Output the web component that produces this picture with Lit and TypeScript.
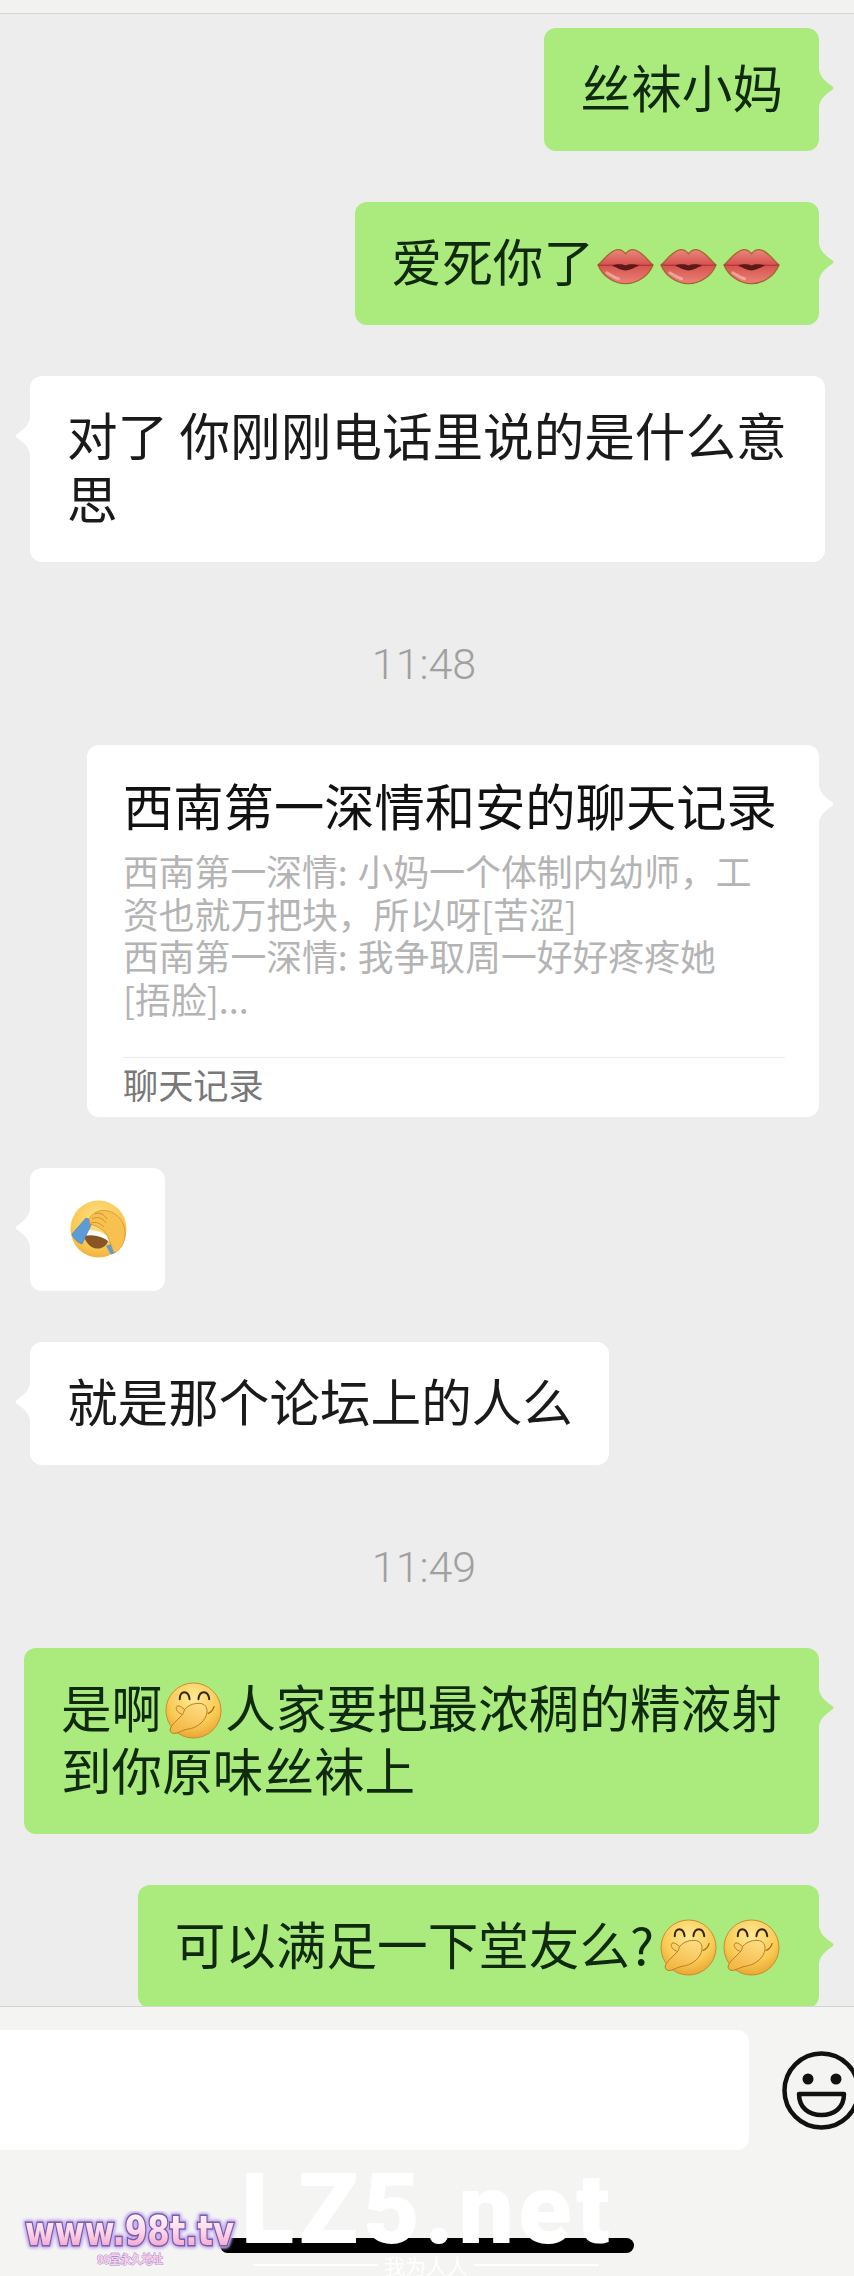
import { LitElement, html, css } from "lit";
import { customElement } from "lit/decorators.js";

const lips = () => html`<svg class="emoji lips" viewBox="0 0 58 38" aria-hidden="true">
  <defs>
    <linearGradient id="lipG" x1="0" y1="0" x2="0" y2="1">
      <stop offset="0" stop-color="#e8877a" /><stop offset=".45" stop-color="#d6524f" /><stop offset="1" stop-color="#ea8277" />
    </linearGradient>
  </defs>
  <path d="M1 17C7 12 12 3 20 1.500C24 1 27 3 29 5.500C31 3 34 1 38 1.500C46 3 51 12 57 17C53 27 42 36 29 36C16 36 5 27 1 17Z" fill="url(#lipG)" stroke="#a3662e" stroke-width="1.300" />
  <path d="M1 17C12 18 20 16 29 18C38 16 46 18 57 17" fill="none" stroke="#a52f2f" stroke-width="1" />
  <path d="M15 17.500C21 15.500 26 16 29 17.500C32 16 37 15.500 43 17.500C37 20 33 22.500 29 22.500C25 22.500 21 20 15 17.500Z" fill="#5a1a17" />
  <path d="M10 25C14 27 17 30 22 31" fill="none" stroke="#ffd9d2" stroke-width="3" stroke-linecap="round" opacity=".5" />
</svg>`;

const giggle = () => html`<svg class="emoji" viewBox="0 0 58 58" aria-hidden="true">
  <defs>
    <radialGradient id="gigF" cx=".5" cy=".3" r=".75">
      <stop offset="0" stop-color="#ffea95" /><stop offset=".6" stop-color="#f9cb55" /><stop offset="1" stop-color="#e79f2c" />
    </radialGradient>
    <linearGradient id="gigH" x1=".7" y1="0" x2=".2" y2="1">
      <stop offset="0" stop-color="#fddc80" /><stop offset="1" stop-color="#f3b442" />
    </linearGradient>
  </defs>
  <circle cx="29" cy="29" r="28" fill="url(#gigF)" stroke="#c98b33" stroke-width="1" />
  <path d="M15 17.500C15 8 24 8 25 17.500M34 17.500C35 8 44 8 45 17.500" fill="none" stroke="#3a2408" stroke-width="2" stroke-linecap="round" />
  <path d="M44 32C47 31 49 28 50 25" fill="none" stroke="#a66d1d" stroke-width="1.300" stroke-linecap="round" />
  <path d="M6 51C4 49 6 45 10 41L18 33C14 32 11 29 11.500 26C12 24 14 24 16 25L20 28C24 23 31 21 37 22C42 23 44 28 42 34C39 42 31 47 23 48C16 49 10 55 6 51Z" fill="url(#gigH)" stroke="#b97a22" stroke-width="1" />
  <path d="M20 28C19 30 19 32 18 33" fill="none" stroke="#b97a22" stroke-width="1" />
</svg>`;

const facepalm = () => html`<svg class="emoji palm" viewBox="0 0 58 58" aria-hidden="true">
  <defs>
    <radialGradient id="palmF" cx=".5" cy=".35" r=".75">
      <stop offset="0" stop-color="#ffe28a" /><stop offset=".65" stop-color="#f9c64f" /><stop offset="1" stop-color="#eea534" />
    </radialGradient>
  </defs>
  <ellipse cx="28.500" cy="29" rx="28" ry="28.500" fill="url(#palmF)" />
  <path d="M14 35C22 33 31 35 38 41C36 47 31 49 26 48.500C20 47.500 15 42 14 35Z" fill="#8a5524" />
  <path d="M15 31C23 29 32 32 39 37L40 42C32 36 23 34 14 36Z" fill="#fff" />
  <path d="M16 18L23 21L12 44C7 42 3 38 2 34Z" fill="#5b9cd6" stroke="#3f7fb8" stroke-width=".6" />
  <path d="M36 46L41 44L46 52C45 53 43 54 41 54.500Z" fill="#5b9cd6" />
  <path d="M19 19C23 12 31 9 38 11C47 13 54 21 55 31C56 41 51 50 44 53L38 37C35 30 27 26 20 24Z" fill="#f7c04f" stroke="#cf9433" stroke-width=".8" />
  <path d="M25 14C29 12 34 14 37 19M22 19C27 16 33 18 36 23M21 23C26 21 31 24 34 27" fill="none" stroke="#cf9433" stroke-width="1" />
</svg>`;

const smiley = () => html`<svg class="smiley" viewBox="0 0 79 79" aria-hidden="true">
  <circle cx="39.500" cy="39.500" r="37" fill="none" stroke="#111" stroke-width="4.500" />
  <circle cx="26" cy="28" r="5.500" fill="#111" />
  <circle cx="54" cy="28" r="5.500" fill="#111" />
  <path d="M17 43H62C62 57 52 64 39.500 64C27 64 17 57 17 43Z" fill="none" stroke="#111" stroke-width="4.500" stroke-linejoin="round" />
</svg>`;

const brand = () => html`<svg class="brand" viewBox="0 0 228 60" role="img">
  <defs>
    <linearGradient id="pink" x1="0" y1="0" x2="0" y2="1">
      <stop offset="0" stop-color="#fff" /><stop offset=".5" stop-color="#fcd8e9" /><stop offset="1" stop-color="#f28fbf" />
    </linearGradient>
  </defs>
  <text class="brand-main" x="5" y="34" textLength="209" lengthAdjust="spacingAndGlyphs" fill="url(#pink)">www.98t.tv</text>
  <text class="brand-sub" x="110" y="53" text-anchor="middle" textLength="66" lengthAdjust="spacingAndGlyphs">99堂永久地址</text>
</svg>`;

@customElement("app-root")
export class AppRoot extends LitElement {
  static styles = css`
    :host {
      display: flex;
      flex-direction: column;
      width: 854px;
      height: 2276px;
      overflow: hidden;
      background: #ededed;
      font-family: "Noto Sans CJK SC", "Noto Sans", sans-serif;
      color: #1a1a1a;
    }
    .top {
      flex: none;
      height: 13px;
      background: #f2f3f0;
      border-bottom: 1px solid #d6d6d6;
    }
    .messages {
      flex: 1;
      min-height: 0;
      overflow: hidden;
      display: flex;
      flex-direction: column;
      gap: 51px;
      padding-top: 14px;
    }
    .bubble {
      position: relative;
      flex: none;
      box-sizing: border-box;
      max-width: 795px;
      padding: 27px 36px 33px 37px;
      border-radius: 12px;
      font-size: 50.600px;
      line-height: 63px;
    }
    .bubble::after {
      content: "";
      position: absolute;
      top: 42px;
      width: 15px;
      height: 36px;
      background: inherit;
    }
    .me {
      align-self: flex-end;
      margin-right: 35px;
      background: #abea7d;
      color: #0f2a0e;
    }
    .me::after,
    .card::after {
      left: 100%;
      clip-path: path("M0 0C2 8 6 11 13 16Q16 18 13 20C6 25 2 28 0 36Z");
    }
    .them {
      align-self: flex-start;
      margin-left: 30px;
      background: #fff;
    }
    .them::after {
      right: 100%;
      clip-path: path("M15 0C13 8 9 11 2 16Q-1 18 2 20C9 25 13 28 15 36Z");
    }
    .time {
      flex: none;
      height: 60px;
      margin: 21px 6px 0 0;
      text-align: center;
      font-family: Roboto, sans-serif;
      font-weight: 300;
      font-size: 43px;
      line-height: 60px;
      color: #a0a0a0;
    }
    .emoji {
      display: inline-block;
      width: 57px;
      height: 57px;
      margin: -10px 3px;
      vertical-align: -1px;
    }
    .emoji.lips {
      height: 38px;
      margin: 0 3px;
      vertical-align: -4px;
    }
    .emoji-only {
      width: 135px;
      height: 123px;
      display: flex;
      align-items: center;
      justify-content: center;
      padding: 0;
    }
    .emoji-only .emoji {
      width: 58px;
      height: 58px;
      margin: 0 0 0 3px;
    }
    .mark {
      padding-right: 3px;
    }
    .card {
      align-self: flex-end;
      margin-right: 35px;
      width: 732px;
      padding: 32px 0 0 36px;
      background: #fff;
      font-size: 50.300px;
      line-height: 54px;
    }
    .card::after {
      top: 41px;
    }
    .card-title {
      color: #111;
      white-space: nowrap;
    }
    .card-desc {
      margin-top: 18px;
      font-size: 35.800px;
      line-height: 42.700px;
      word-spacing: 2px;
      color: #b4b4b4;
      white-space: nowrap;
    }
    .card-desc span {
      display: block;
    }
    .card-foot {
      margin: 37px 34px 0 0;
      padding-bottom: 7px;
      border-top: 1px solid #ececec;
      font-size: 35.200px;
      line-height: 52px;
      color: #787878;
    }
    .dock {
      position: relative;
      flex: none;
      height: 270px;
      box-sizing: border-box;
      background: #f4f5f3;
      border-top: 1px solid #d4d4d4;
      padding-top: 23px;
    }
    .dock-row {
      display: flex;
      align-items: center;
      gap: 33px;
    }
    .input {
      flex: none;
      width: 749px;
      height: 120px;
      background: #fff;
      border-radius: 0 12px 12px 0;
    }
    .smiley {
      flex: none;
      width: 79px;
      height: 79px;
    }
    .home {
      position: absolute;
      left: 220px;
      top: 231px;
      width: 414px;
      height: 15px;
      border-radius: 8px;
      background: #000;
    }
    .lz5 {
      position: absolute;
      left: 241px;
      top: 148px;
      font-family: Roboto, sans-serif;
      font-weight: 900;
      font-size: 98px;
      line-height: 110px;
      letter-spacing: 4.500px;
      color: #fff;
      white-space: nowrap;
    }
    .motto {
      position: absolute;
      left: 253px;
      top: 244px;
      width: 346px;
      display: flex;
      align-items: center;
      gap: 6px;
      font-size: 21px;
      line-height: 28px;
      color: #fff;
    }
    .motto i {
      flex: 1;
      height: 2px;
      background: #fff;
    }
    .brand {
      position: absolute;
      left: 20px;
      top: 204px;
      width: 228px;
      height: 60px;
    }
    .brand-main {
      font-family: "DejaVu Sans", sans-serif;
      font-weight: 700;
      font-size: 41px;
      stroke: #7a5ca8;
      stroke-width: 3px;
      paint-order: stroke fill;
      filter: drop-shadow(0 0 1.500px #c3aef0) drop-shadow(0 0 1.500px #c3aef0) drop-shadow(0 0 1px #c3aef0);
    }
    .brand-sub {
      font-size: 12px;
      font-weight: 700;
      fill: #fbd3e6;
      stroke: #a98cd6;
      stroke-width: 1px;
      paint-order: stroke fill;
    }
  `;

  render() {
    return html`
      <div class="top"></div>
      <div class="messages">
        <div class="bubble me">丝袜小妈</div>
        <div class="bubble me">爱死你了${lips()}${lips()}${lips()}</div>
        <div class="bubble them">对了 你刚刚电话里说的是什么意思</div>
        <div class="time">11:48</div>
        <div class="bubble card">
          <div class="card-title">西南第一深情和安的聊天记录</div>
          <div class="card-desc">
            <span>西南第一深情: 小妈一个体制内幼师，工</span>
            <span>资也就万把块，所以呀[苦涩]</span>
            <span>西南第一深情: 我争取周一好好疼疼她</span>
            <span>[捂脸]...</span>
          </div>
          <div class="card-foot">聊天记录</div>
        </div>
        <div class="bubble them emoji-only">${facepalm()}</div>
        <div class="bubble them">就是那个论坛上的人么</div>
        <div class="time">11:49</div>
        <div class="bubble me">是啊${giggle()}人家要把最浓稠的精液射到你原味丝袜上</div>
        <div class="bubble me"><span class="mark">可以满足一下堂友么?</span>${giggle()}${giggle()}</div>
      </div>
      <div class="dock">
        <div class="dock-row">
          <div class="input"></div>
          ${smiley()}
        </div>
        <div class="home"></div>
        <div class="lz5">LZ5.net</div>
        <div class="motto"><i></i><span>我为人人</span><i></i></div>
        ${brand()}
      </div>
    `;
  }
}
